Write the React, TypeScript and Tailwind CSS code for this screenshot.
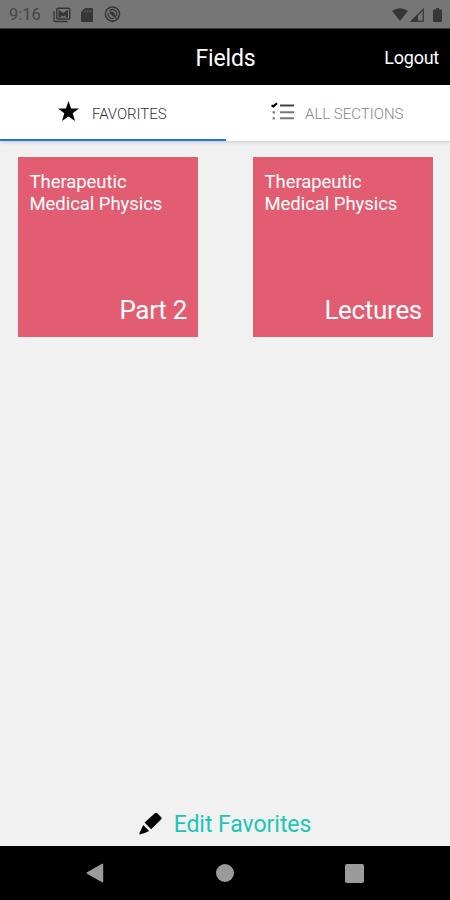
type Field = {
  id: string;
  title: string;
  section: string;
};

const favorites: Field[] = [
  { id: "part-2", title: "Therapeutic Medical Physics", section: "Part 2" },
  { id: "lectures", title: "Therapeutic Medical Physics", section: "Lectures" },
];

function StatusBar() {
  return (
    <div className="flex h-7 shrink-0 items-center justify-between bg-[#767676] pt-px pr-2 pl-[9px] text-[#363636]">
      <div className="flex items-center">
        <span className="w-[44px] pt-[2px] text-[16.5px] leading-none text-[#454545]">9:16</span>
        <svg className="h-4 w-[18px]" viewBox="0 0 18 16" fill="none" stroke="currentColor">
          <path d="M1 4v9.5q0 1 1 1h12.5" strokeWidth="1.3" />
          <rect x="3.8" y="1.2" width="13" height="10.8" rx="1" strokeWidth="1.4" />
          <path d="M5.5 2.5v8h9.5v-8l-4.7 3.6z" fill="currentColor" stroke="none" />
          <path d="M8 10.5V8.2l2.3 1.2 2.3-1.2v2.3z" fill="#767676" stroke="none" />
        </svg>
        <svg className="ml-[10px] h-[14px] w-3" viewBox="0 0 12 14" fill="currentColor">
          <path d="M4 0h7q1 0 1 1v12q0 1-1 1H1q-1 0-1-1V4z" />
          <path d="M4.2 2v2.6M6.8 2v2.6M9.3 2v2.6" stroke="#5e5e5e" strokeWidth="1" />
        </svg>
        <svg className="ml-[11px] size-[17px]" viewBox="0 0 17 17" fill="none" stroke="currentColor">
          <circle cx="8.5" cy="8" r="7.1" strokeWidth="1.5" />
          <path d="M5.3 4.9A4.5 4.5 0 0 1 12.5 10M4.2 7A4.5 4.5 0 0 0 9.5 12.4" strokeWidth="1.3" />
          <path d="M6 6q4-.5 5.5 5.5L5.8 6.5" fill="currentColor" strokeWidth="1.6" />
          <path d="M6.5 14.8h4l-2 2z" fill="currentColor" stroke="none" />
        </svg>
      </div>
      <div className="flex items-center">
        <svg className="h-[13px] w-4" viewBox="0 0 16 13" fill="currentColor">
          <path d="M0 3Q8-2.5 16 3L8 13z" />
        </svg>
        <svg className="ml-[2px] h-[14px] w-[14px]" viewBox="0 0 14 14">
          <path d="M1.5 13.2L13.2 1.5V13.2z" fill="none" stroke="currentColor" strokeWidth="1.3" />
          <path d="M0 14L8 6v8z" fill="currentColor" />
        </svg>
        <svg className="ml-[9px] h-[14px] w-[9px]" viewBox="0 0 9 14" fill="currentColor">
          <path d="M3 0h3v1.4h2q1 0 1 1V13q0 1-1 1H1q-1 0-1-1V2.4q0-1 1-1h2z" />
        </svg>
      </div>
    </div>
  );
}

function Header() {
  return (
    <header className="grid h-[57px] shrink-0 grid-cols-3 items-center border-t border-[#3a3a3a] bg-black pt-[2px] pr-[11px] pl-[11px] text-white">
      <h1 className="col-start-2 pl-px text-center text-[23px] leading-none tracking-[-0.2px]">Fields</h1>
      <button className="text-right text-[18px] leading-none tracking-[-0.25px]">Logout</button>
    </header>
  );
}

function Tabs() {
  return (
    <nav className="flex h-14 shrink-0 bg-white text-[15px] shadow-[0_1px_4px_rgba(0,0,0,0.18)]">
      <button className="flex w-[226px] items-center border-b-2 border-[#2673d9] pt-[3px] pl-[58px] text-[#333]">
        <svg className="mb-1 size-[21px]" viewBox="0 0 21 21" fill="black">
          <path d="M10.5 0l2.6 7.4 7.9.1-6.3 4.8 2.3 7.7-6.5-4.5L4 20l2.3-7.7L0 7.5l7.9-.1z" />
        </svg>
        <span className="ml-[13px] pt-px font-light tracking-[-0.05px]">FAVORITES</span>
      </button>
      <button className="flex flex-1 items-center pt-px pl-[45px] text-[#858585]">
        <svg className="mb-[5px] h-[19px] w-6" viewBox="0 0 24 19" fill="none" stroke="#777">
          <path d="M9 3.5h14" stroke="#444" strokeWidth="2" />
          <path d="M9 10.3h14M9 16.3h14" strokeWidth="2" />
          <path d="M.5 3.4l1.8 1L6 1.2" stroke="black" strokeWidth="2.1" />
          <path d="M1.6 10.3h2.3M1.6 16.3h2.3" strokeWidth="2.2" />
        </svg>
        <span className="ml-[10px] pt-px font-light">ALL SECTIONS</span>
      </button>
    </nav>
  );
}

function FieldCard({ field }: { field: Field }) {
  return (
    <article className="flex size-[180px] flex-col justify-between bg-[#e25d72] pt-[15px] pr-[11px] pb-[11px] pl-[11.5px] text-white">
      <h2 className="w-[140px] text-[18.5px] leading-[21.5px] tracking-[-0.05px]">{field.title}</h2>
      <p className="text-right text-[26px] leading-8 tracking-[-0.3px]">{field.section}</p>
    </article>
  );
}

function NavigationBar() {
  return (
    <div className="flex h-[54px] shrink-0 items-center justify-between bg-black pr-[86px] pl-[86px] text-[#9b9b9b]">
      <svg className="h-5 w-[18px]" viewBox="0 0 18 20" fill="currentColor">
        <path d="M16 .8q1.2-.6 1.2.6v17.2q0 1.2-1.2.6L1 10.8q-1-.8 0-1.6z" />
      </svg>
      <div className="size-[18px] rounded-full bg-[#9b9b9b]" />
      <div className="size-[19px] rounded-[2px] bg-[#9b9b9b]" />
    </div>
  );
}

export default function App() {
  return (
    <div className="flex h-[900px] w-[450px] flex-col overflow-hidden bg-[#f1f1f1] font-[Roboto,sans-serif]">
      <StatusBar />
      <Header />
      <Tabs />
      <main className="flex flex-1 flex-col justify-between">
        <div className="flex justify-between pt-[16.4px] pr-[17px] pl-[18px]">
          {favorites.map((field) => (
            <FieldCard key={field.id} field={field} />
          ))}
        </div>
        <button className="mb-[7px] flex items-center justify-center text-[23px] leading-7 tracking-[-0.05px] text-[#20c5b5]">
          <svg className="mr-3 mb-[3px] size-[23px]" viewBox="0 0 23 23" fill="black">
            <path d="M5.6 10.5L15.9 1.2q1.4-1 2.6.2l3.7 3.9q.9 1.2-.2 2.3L12.1 17.3z" />
            <path d="M4.2 13.1l6 6q-3 2-9.4 3.4-.8-.2-.4-1.2z" />
          </svg>
          Edit Favorites
        </button>
      </main>
      <NavigationBar />
    </div>
  );
}
